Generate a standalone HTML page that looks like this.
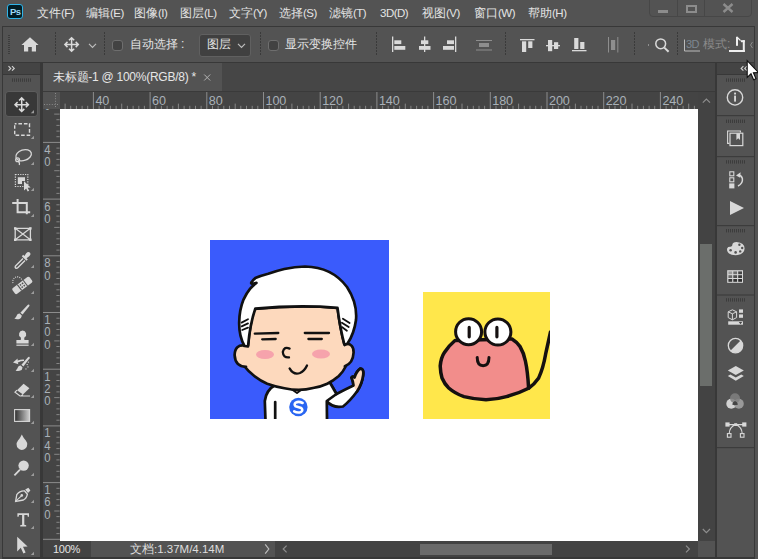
<!DOCTYPE html>
<html lang="zh">
<head>
<meta charset="utf-8">
<title>Photoshop</title>
<style>
*{margin:0;padding:0;box-sizing:border-box}
html,body{width:758px;height:559px;overflow:hidden;background:#535353}
body{position:relative;font-family:"Liberation Sans",sans-serif;color:#dcdcdc;font-size:13px}
.abs{position:absolute}
#menubar{position:absolute;left:0;top:0;width:758px;height:26px;background:#535353}
#menubar .mi{position:absolute;top:4px;height:18px;line-height:18px;font-size:12px;color:#e4e4e4;white-space:nowrap}
#menubar .mi i{font-style:normal;font-size:11.5px;letter-spacing:-0.5px}
#frame{position:absolute;left:2px;top:26px;width:753px;height:533px;background:#383838}
#optbar{position:absolute;left:3px;top:27px;width:751px;height:35px;background:#535353}
.vsep{position:absolute;top:5px;width:1px;height:24px;background:repeating-linear-gradient(to bottom,#3a3a3a 0 2px,transparent 2px 3px)}
.cb{position:absolute;width:11px;height:11px;border:1px solid #6e6e6e;border-radius:3px;background:#424242}
.ot{position:absolute;top:8px;height:18px;line-height:18px;font-size:12px;color:#e4e4e4;white-space:nowrap}
#toolhead{position:absolute;left:3px;top:63px;width:37px;height:11px;background:#444}
#tools{position:absolute;left:3px;top:75px;width:37px;height:482px;background:#535353}
#tabbar{position:absolute;left:43px;top:63px;width:672px;height:28px;background:#464646}
#tab{position:absolute;left:43px;top:63px;width:179px;height:28px;background:#535353;font-size:13px;line-height:28px;color:#e6e6e6;white-space:nowrap}
#hruler{position:absolute;left:43px;top:92px;width:655px;height:17px;background:#444;overflow:hidden}
#vruler{position:absolute;left:43px;top:109px;width:17px;height:432px;background:#444;overflow:hidden}
#rcorner{position:absolute;left:43px;top:92px;width:17px;height:17px;background:#535353}
#canvas{position:absolute;left:60px;top:109px;width:638px;height:432px;background:#fff;overflow:hidden}
#vscroll{position:absolute;left:698px;top:92px;width:17px;height:449px;background:#434343}
#status{position:absolute;left:43px;top:541px;width:672px;height:16px;background:#535353}
#rhead{position:absolute;left:717px;top:63px;width:37px;height:11px;background:#444}
#rpanel{position:absolute;left:717px;top:75px;width:37px;height:482px;background:#535353}
</style>
</head>
<body>
<div id="menubar">
<div class="abs" style="left:7px;top:4px;width:16px;height:15px;background:#001d26;border:1px solid #2fb4e9;border-radius:3px"></div>
<span class="abs" style="left:10px;top:5px;font-size:9.5px;line-height:13px;font-weight:bold;color:#9fd9f6;letter-spacing:-0.5px">Ps</span>
<span class="mi" style="left:37px">文件<i>(F)</i></span>
<span class="mi" style="left:86px">编辑<i>(E)</i></span>
<span class="mi" style="left:134px">图像<i>(I)</i></span>
<span class="mi" style="left:180px">图层<i>(L)</i></span>
<span class="mi" style="left:229px">文字<i>(Y)</i></span>
<span class="mi" style="left:279px">选择<i>(S)</i></span>
<span class="mi" style="left:329px">滤镜<i>(T)</i></span>
<span class="mi" style="left:380px"><i>3D(D)</i></span>
<span class="mi" style="left:422px">视图<i>(V)</i></span>
<span class="mi" style="left:474px">窗口<i>(W)</i></span>
<span class="mi" style="left:528px">帮助<i>(H)</i></span>
<div class="abs" style="left:649px;top:-1px;width:103px;height:18px;border:1px solid #474747;border-radius:0 0 4px 4px"></div>
<div class="abs" style="left:677px;top:0;width:1px;height:17px;background:#474747"></div>
<div class="abs" style="left:704px;top:0;width:1px;height:17px;background:#474747"></div>
<div class="abs" style="left:658px;top:10px;width:10px;height:3px;background:#8c8c8c"></div>
<div class="abs" style="left:686px;top:5px;width:10.5px;height:8px;border:2px solid #8c8c8c"></div>
<svg class="abs" style="left:722px;top:3px" width="12" height="10" viewBox="0 0 12 10"><path d="M1.5 1 L10.5 9 M10.5 1 L1.5 9" stroke="#8c8c8c" stroke-width="2.4" fill="none"/></svg>
</div>
<div id="frame"></div>
<div id="optbar">
<div class="abs" style="left:5px;top:8px;width:2px;height:20px;background:repeating-linear-gradient(to bottom,#3c3c3c 0 1px,transparent 1px 2px)"></div>
<div class="vsep" style="left:52px"></div>
<div class="vsep" style="left:101px"></div>
<div class="cb" style="left:109px;top:13px"></div>
<span class="ot" style="left:127px">自动选择<span style="margin-left:3px">:</span></span>
<div class="abs" style="left:196px;top:7px;width:52px;height:23px;background:#404040;border:1px solid #606060;border-radius:3px"></div>
<span class="ot" style="left:204px">图层</span>
<div class="vsep" style="left:257px"></div>
<div class="cb" style="left:265px;top:13px"></div>
<span class="ot" style="left:282px">显示变换控件</span>
<div class="vsep" style="left:373px"></div>
<div class="vsep" style="left:502px"></div>
<div class="vsep" style="left:631px"></div>
<div class="vsep" style="left:674px"></div>
<span class="ot" style="left:683px;color:#7d8790;font-size:11px;letter-spacing:-0.5px">3D</span>
<span class="ot" style="left:700px;color:#8a8a8a;font-size:12px">模式:</span>
</div>
<div id="toolhead"></div>
<div id="tools"></div>
<div id="tabbar"></div>
<div id="tab"><span id="tabtxt" style="position:absolute;left:10px;font-size:12px;letter-spacing:-0.25px">未标题-1 @ 100%(RGB/8) *</span><svg class="abs" style="left:160px;top:10px" width="9" height="9" viewBox="0 0 9 9"><path d="M1.2 1.5 L7.2 7.5 M7.2 1.5 L1.2 7.5" stroke="#b4b4b4" stroke-width="1" fill="none"/></svg></div>
<div class="abs" style="left:43px;top:91px;width:672px;height:1px;background:#3a3a3a"></div>
<div id="hruler"></div>
<div id="vruler"></div>
<div id="rcorner"></div>
<svg class="abs" style="left:0;top:0" width="758" height="559" viewBox="0 0 758 559" font-family="Liberation Sans, sans-serif">
<defs><clipPath id="hc"><rect x="60" y="92" width="638" height="17"/></clipPath><clipPath id="vc"><rect x="43" y="109" width="17" height="432"/></clipPath></defs>
<g clip-path="url(#hc)"><rect x="58.9" y="105.8" width="1" height="3.2" fill="#858585"/><rect x="64.6" y="103.6" width="1" height="5.4" fill="#858585"/><rect x="70.2" y="105.8" width="1" height="3.2" fill="#858585"/><rect x="75.9" y="105.8" width="1" height="3.2" fill="#858585"/><rect x="81.6" y="105.8" width="1" height="3.2" fill="#858585"/><rect x="87.2" y="105.8" width="1" height="3.2" fill="#858585"/><rect x="92.9" y="92" width="1" height="17" fill="#8c8c8c"/><text x="95.4" y="105.4" fill="#a9b1b8" font-size="12.6" letter-spacing="-0.1">40</text><rect x="98.6" y="105.8" width="1" height="3.2" fill="#858585"/><rect x="104.2" y="105.8" width="1" height="3.2" fill="#858585"/><rect x="109.9" y="105.8" width="1" height="3.2" fill="#858585"/><rect x="115.6" y="105.8" width="1" height="3.2" fill="#858585"/><rect x="121.2" y="103.6" width="1" height="5.4" fill="#858585"/><rect x="126.9" y="105.8" width="1" height="3.2" fill="#858585"/><rect x="132.6" y="105.8" width="1" height="3.2" fill="#858585"/><rect x="138.3" y="105.8" width="1" height="3.2" fill="#858585"/><rect x="143.9" y="105.8" width="1" height="3.2" fill="#858585"/><rect x="149.6" y="92" width="1" height="17" fill="#8c8c8c"/><text x="152.1" y="105.4" fill="#a9b1b8" font-size="12.6" letter-spacing="-0.1">60</text><rect x="155.3" y="105.8" width="1" height="3.2" fill="#858585"/><rect x="160.9" y="105.8" width="1" height="3.2" fill="#858585"/><rect x="166.6" y="105.8" width="1" height="3.2" fill="#858585"/><rect x="172.3" y="105.8" width="1" height="3.2" fill="#858585"/><rect x="177.9" y="103.6" width="1" height="5.4" fill="#858585"/><rect x="183.6" y="105.8" width="1" height="3.2" fill="#858585"/><rect x="189.3" y="105.8" width="1" height="3.2" fill="#858585"/><rect x="195.0" y="105.8" width="1" height="3.2" fill="#858585"/><rect x="200.6" y="105.8" width="1" height="3.2" fill="#858585"/><rect x="206.3" y="92" width="1" height="17" fill="#8c8c8c"/><text x="208.8" y="105.4" fill="#a9b1b8" font-size="12.6" letter-spacing="-0.1">80</text><rect x="212.0" y="105.8" width="1" height="3.2" fill="#858585"/><rect x="217.6" y="105.8" width="1" height="3.2" fill="#858585"/><rect x="223.3" y="105.8" width="1" height="3.2" fill="#858585"/><rect x="229.0" y="105.8" width="1" height="3.2" fill="#858585"/><rect x="234.7" y="103.6" width="1" height="5.4" fill="#858585"/><rect x="240.3" y="105.8" width="1" height="3.2" fill="#858585"/><rect x="246.0" y="105.8" width="1" height="3.2" fill="#858585"/><rect x="251.7" y="105.8" width="1" height="3.2" fill="#858585"/><rect x="257.3" y="105.8" width="1" height="3.2" fill="#858585"/><rect x="263.0" y="92" width="1" height="17" fill="#8c8c8c"/><text x="265.5" y="105.4" fill="#a9b1b8" font-size="12.6" letter-spacing="-0.1">100</text><rect x="268.7" y="105.8" width="1" height="3.2" fill="#858585"/><rect x="274.3" y="105.8" width="1" height="3.2" fill="#858585"/><rect x="280.0" y="105.8" width="1" height="3.2" fill="#858585"/><rect x="285.7" y="105.8" width="1" height="3.2" fill="#858585"/><rect x="291.4" y="103.6" width="1" height="5.4" fill="#858585"/><rect x="297.0" y="105.8" width="1" height="3.2" fill="#858585"/><rect x="302.7" y="105.8" width="1" height="3.2" fill="#858585"/><rect x="308.4" y="105.8" width="1" height="3.2" fill="#858585"/><rect x="314.0" y="105.8" width="1" height="3.2" fill="#858585"/><rect x="319.7" y="92" width="1" height="17" fill="#8c8c8c"/><text x="322.2" y="105.4" fill="#a9b1b8" font-size="12.6" letter-spacing="-0.1">120</text><rect x="325.4" y="105.8" width="1" height="3.2" fill="#858585"/><rect x="331.0" y="105.8" width="1" height="3.2" fill="#858585"/><rect x="336.7" y="105.8" width="1" height="3.2" fill="#858585"/><rect x="342.4" y="105.8" width="1" height="3.2" fill="#858585"/><rect x="348.1" y="103.6" width="1" height="5.4" fill="#858585"/><rect x="353.7" y="105.8" width="1" height="3.2" fill="#858585"/><rect x="359.4" y="105.8" width="1" height="3.2" fill="#858585"/><rect x="365.1" y="105.8" width="1" height="3.2" fill="#858585"/><rect x="370.7" y="105.8" width="1" height="3.2" fill="#858585"/><rect x="376.4" y="92" width="1" height="17" fill="#8c8c8c"/><text x="378.9" y="105.4" fill="#a9b1b8" font-size="12.6" letter-spacing="-0.1">140</text><rect x="382.1" y="105.8" width="1" height="3.2" fill="#858585"/><rect x="387.7" y="105.8" width="1" height="3.2" fill="#858585"/><rect x="393.4" y="105.8" width="1" height="3.2" fill="#858585"/><rect x="399.1" y="105.8" width="1" height="3.2" fill="#858585"/><rect x="404.8" y="103.6" width="1" height="5.4" fill="#858585"/><rect x="410.4" y="105.8" width="1" height="3.2" fill="#858585"/><rect x="416.1" y="105.8" width="1" height="3.2" fill="#858585"/><rect x="421.8" y="105.8" width="1" height="3.2" fill="#858585"/><rect x="427.4" y="105.8" width="1" height="3.2" fill="#858585"/><rect x="433.1" y="92" width="1" height="17" fill="#8c8c8c"/><text x="435.6" y="105.4" fill="#a9b1b8" font-size="12.6" letter-spacing="-0.1">160</text><rect x="438.8" y="105.8" width="1" height="3.2" fill="#858585"/><rect x="444.4" y="105.8" width="1" height="3.2" fill="#858585"/><rect x="450.1" y="105.8" width="1" height="3.2" fill="#858585"/><rect x="455.8" y="105.8" width="1" height="3.2" fill="#858585"/><rect x="461.5" y="103.6" width="1" height="5.4" fill="#858585"/><rect x="467.1" y="105.8" width="1" height="3.2" fill="#858585"/><rect x="472.8" y="105.8" width="1" height="3.2" fill="#858585"/><rect x="478.5" y="105.8" width="1" height="3.2" fill="#858585"/><rect x="484.1" y="105.8" width="1" height="3.2" fill="#858585"/><rect x="489.8" y="92" width="1" height="17" fill="#8c8c8c"/><text x="492.3" y="105.4" fill="#a9b1b8" font-size="12.6" letter-spacing="-0.1">180</text><rect x="495.5" y="105.8" width="1" height="3.2" fill="#858585"/><rect x="501.1" y="105.8" width="1" height="3.2" fill="#858585"/><rect x="506.8" y="105.8" width="1" height="3.2" fill="#858585"/><rect x="512.5" y="105.8" width="1" height="3.2" fill="#858585"/><rect x="518.1" y="103.6" width="1" height="5.4" fill="#858585"/><rect x="523.8" y="105.8" width="1" height="3.2" fill="#858585"/><rect x="529.5" y="105.8" width="1" height="3.2" fill="#858585"/><rect x="535.2" y="105.8" width="1" height="3.2" fill="#858585"/><rect x="540.8" y="105.8" width="1" height="3.2" fill="#858585"/><rect x="546.5" y="92" width="1" height="17" fill="#8c8c8c"/><text x="549.0" y="105.4" fill="#a9b1b8" font-size="12.6" letter-spacing="-0.1">200</text><rect x="552.2" y="105.8" width="1" height="3.2" fill="#858585"/><rect x="557.8" y="105.8" width="1" height="3.2" fill="#858585"/><rect x="563.5" y="105.8" width="1" height="3.2" fill="#858585"/><rect x="569.2" y="105.8" width="1" height="3.2" fill="#858585"/><rect x="574.9" y="103.6" width="1" height="5.4" fill="#858585"/><rect x="580.5" y="105.8" width="1" height="3.2" fill="#858585"/><rect x="586.2" y="105.8" width="1" height="3.2" fill="#858585"/><rect x="591.9" y="105.8" width="1" height="3.2" fill="#858585"/><rect x="597.5" y="105.8" width="1" height="3.2" fill="#858585"/><rect x="603.2" y="92" width="1" height="17" fill="#8c8c8c"/><text x="605.7" y="105.4" fill="#a9b1b8" font-size="12.6" letter-spacing="-0.1">220</text><rect x="608.9" y="105.8" width="1" height="3.2" fill="#858585"/><rect x="614.5" y="105.8" width="1" height="3.2" fill="#858585"/><rect x="620.2" y="105.8" width="1" height="3.2" fill="#858585"/><rect x="625.9" y="105.8" width="1" height="3.2" fill="#858585"/><rect x="631.5" y="103.6" width="1" height="5.4" fill="#858585"/><rect x="637.2" y="105.8" width="1" height="3.2" fill="#858585"/><rect x="642.9" y="105.8" width="1" height="3.2" fill="#858585"/><rect x="648.6" y="105.8" width="1" height="3.2" fill="#858585"/><rect x="654.2" y="105.8" width="1" height="3.2" fill="#858585"/><rect x="659.9" y="92" width="1" height="17" fill="#8c8c8c"/><text x="662.4" y="105.4" fill="#a9b1b8" font-size="12.6" letter-spacing="-0.1">240</text><rect x="665.6" y="105.8" width="1" height="3.2" fill="#858585"/><rect x="671.2" y="105.8" width="1" height="3.2" fill="#858585"/><rect x="676.9" y="105.8" width="1" height="3.2" fill="#858585"/><rect x="682.6" y="105.8" width="1" height="3.2" fill="#858585"/><rect x="688.2" y="103.6" width="1" height="5.4" fill="#858585"/><rect x="693.9" y="105.8" width="1" height="3.2" fill="#858585"/></g>
<g clip-path="url(#vc)"><rect x="56.4" y="107.9" width="3.2" height="1" fill="#858585"/><rect x="54.2" y="113.6" width="5.4" height="1" fill="#858585"/><rect x="56.4" y="119.2" width="3.2" height="1" fill="#858585"/><rect x="56.4" y="124.9" width="3.2" height="1" fill="#858585"/><rect x="56.4" y="130.6" width="3.2" height="1" fill="#858585"/><rect x="56.4" y="136.2" width="3.2" height="1" fill="#858585"/><rect x="43" y="141.9" width="17" height="1" fill="#8c8c8c"/><text transform="translate(44.2 153.9) scale(0.9 1)" fill="#a9b1b8" font-size="12.6">4</text><text transform="translate(44.2 166.2) scale(0.9 1)" fill="#a9b1b8" font-size="12.6">0</text><rect x="56.4" y="147.6" width="3.2" height="1" fill="#858585"/><rect x="56.4" y="153.2" width="3.2" height="1" fill="#858585"/><rect x="56.4" y="158.9" width="3.2" height="1" fill="#858585"/><rect x="56.4" y="164.6" width="3.2" height="1" fill="#858585"/><rect x="54.2" y="170.2" width="5.4" height="1" fill="#858585"/><rect x="56.4" y="175.9" width="3.2" height="1" fill="#858585"/><rect x="56.4" y="181.6" width="3.2" height="1" fill="#858585"/><rect x="56.4" y="187.3" width="3.2" height="1" fill="#858585"/><rect x="56.4" y="192.9" width="3.2" height="1" fill="#858585"/><rect x="43" y="198.6" width="17" height="1" fill="#8c8c8c"/><text transform="translate(44.2 210.6) scale(0.9 1)" fill="#a9b1b8" font-size="12.6">6</text><text transform="translate(44.2 222.9) scale(0.9 1)" fill="#a9b1b8" font-size="12.6">0</text><rect x="56.4" y="204.3" width="3.2" height="1" fill="#858585"/><rect x="56.4" y="209.9" width="3.2" height="1" fill="#858585"/><rect x="56.4" y="215.6" width="3.2" height="1" fill="#858585"/><rect x="56.4" y="221.3" width="3.2" height="1" fill="#858585"/><rect x="54.2" y="226.9" width="5.4" height="1" fill="#858585"/><rect x="56.4" y="232.6" width="3.2" height="1" fill="#858585"/><rect x="56.4" y="238.3" width="3.2" height="1" fill="#858585"/><rect x="56.4" y="244.0" width="3.2" height="1" fill="#858585"/><rect x="56.4" y="249.6" width="3.2" height="1" fill="#858585"/><rect x="43" y="255.3" width="17" height="1" fill="#8c8c8c"/><text transform="translate(44.2 267.3) scale(0.9 1)" fill="#a9b1b8" font-size="12.6">8</text><text transform="translate(44.2 279.6) scale(0.9 1)" fill="#a9b1b8" font-size="12.6">0</text><rect x="56.4" y="261.0" width="3.2" height="1" fill="#858585"/><rect x="56.4" y="266.6" width="3.2" height="1" fill="#858585"/><rect x="56.4" y="272.3" width="3.2" height="1" fill="#858585"/><rect x="56.4" y="278.0" width="3.2" height="1" fill="#858585"/><rect x="54.2" y="283.6" width="5.4" height="1" fill="#858585"/><rect x="56.4" y="289.3" width="3.2" height="1" fill="#858585"/><rect x="56.4" y="295.0" width="3.2" height="1" fill="#858585"/><rect x="56.4" y="300.7" width="3.2" height="1" fill="#858585"/><rect x="56.4" y="306.3" width="3.2" height="1" fill="#858585"/><rect x="43" y="312.0" width="17" height="1" fill="#8c8c8c"/><text transform="translate(44.2 324.0) scale(0.9 1)" fill="#a9b1b8" font-size="12.6">1</text><text transform="translate(44.2 336.3) scale(0.9 1)" fill="#a9b1b8" font-size="12.6">0</text><text transform="translate(44.2 348.6) scale(0.9 1)" fill="#a9b1b8" font-size="12.6">0</text><rect x="56.4" y="317.7" width="3.2" height="1" fill="#858585"/><rect x="56.4" y="323.3" width="3.2" height="1" fill="#858585"/><rect x="56.4" y="329.0" width="3.2" height="1" fill="#858585"/><rect x="56.4" y="334.7" width="3.2" height="1" fill="#858585"/><rect x="54.2" y="340.4" width="5.4" height="1" fill="#858585"/><rect x="56.4" y="346.0" width="3.2" height="1" fill="#858585"/><rect x="56.4" y="351.7" width="3.2" height="1" fill="#858585"/><rect x="56.4" y="357.4" width="3.2" height="1" fill="#858585"/><rect x="56.4" y="363.0" width="3.2" height="1" fill="#858585"/><rect x="43" y="368.7" width="17" height="1" fill="#8c8c8c"/><text transform="translate(44.2 380.7) scale(0.9 1)" fill="#a9b1b8" font-size="12.6">1</text><text transform="translate(44.2 393.0) scale(0.9 1)" fill="#a9b1b8" font-size="12.6">2</text><text transform="translate(44.2 405.3) scale(0.9 1)" fill="#a9b1b8" font-size="12.6">0</text><rect x="56.4" y="374.4" width="3.2" height="1" fill="#858585"/><rect x="56.4" y="380.0" width="3.2" height="1" fill="#858585"/><rect x="56.4" y="385.7" width="3.2" height="1" fill="#858585"/><rect x="56.4" y="391.4" width="3.2" height="1" fill="#858585"/><rect x="54.2" y="397.1" width="5.4" height="1" fill="#858585"/><rect x="56.4" y="402.7" width="3.2" height="1" fill="#858585"/><rect x="56.4" y="408.4" width="3.2" height="1" fill="#858585"/><rect x="56.4" y="414.1" width="3.2" height="1" fill="#858585"/><rect x="56.4" y="419.7" width="3.2" height="1" fill="#858585"/><rect x="43" y="425.4" width="17" height="1" fill="#8c8c8c"/><text transform="translate(44.2 437.4) scale(0.9 1)" fill="#a9b1b8" font-size="12.6">1</text><text transform="translate(44.2 449.7) scale(0.9 1)" fill="#a9b1b8" font-size="12.6">4</text><text transform="translate(44.2 462.0) scale(0.9 1)" fill="#a9b1b8" font-size="12.6">0</text><rect x="56.4" y="431.1" width="3.2" height="1" fill="#858585"/><rect x="56.4" y="436.7" width="3.2" height="1" fill="#858585"/><rect x="56.4" y="442.4" width="3.2" height="1" fill="#858585"/><rect x="56.4" y="448.1" width="3.2" height="1" fill="#858585"/><rect x="54.2" y="453.8" width="5.4" height="1" fill="#858585"/><rect x="56.4" y="459.4" width="3.2" height="1" fill="#858585"/><rect x="56.4" y="465.1" width="3.2" height="1" fill="#858585"/><rect x="56.4" y="470.8" width="3.2" height="1" fill="#858585"/><rect x="56.4" y="476.4" width="3.2" height="1" fill="#858585"/><rect x="43" y="482.1" width="17" height="1" fill="#8c8c8c"/><text transform="translate(44.2 494.1) scale(0.9 1)" fill="#a9b1b8" font-size="12.6">1</text><text transform="translate(44.2 506.4) scale(0.9 1)" fill="#a9b1b8" font-size="12.6">6</text><text transform="translate(44.2 518.7) scale(0.9 1)" fill="#a9b1b8" font-size="12.6">0</text><rect x="56.4" y="487.8" width="3.2" height="1" fill="#858585"/><rect x="56.4" y="493.4" width="3.2" height="1" fill="#858585"/><rect x="56.4" y="499.1" width="3.2" height="1" fill="#858585"/><rect x="56.4" y="504.8" width="3.2" height="1" fill="#858585"/><rect x="54.2" y="510.5" width="5.4" height="1" fill="#858585"/><rect x="56.4" y="516.1" width="3.2" height="1" fill="#858585"/><rect x="56.4" y="521.8" width="3.2" height="1" fill="#858585"/><rect x="56.4" y="527.5" width="3.2" height="1" fill="#858585"/><rect x="56.4" y="533.1" width="3.2" height="1" fill="#858585"/><rect x="43" y="538.8" width="17" height="1" fill="#8c8c8c"/><text transform="translate(44.2 550.8) scale(0.9 1)" fill="#a9b1b8" font-size="12.6">1</text><text transform="translate(44.2 563.1) scale(0.9 1)" fill="#a9b1b8" font-size="12.6">8</text><text transform="translate(44.2 575.4) scale(0.9 1)" fill="#a9b1b8" font-size="12.6">0</text><text transform="translate(44.2 109.5) scale(0.9 1)" fill="#a9b1b8" font-size="12.6">0</text></g>
<path d="M55.5 93 V108 M44 104.5 H59" stroke="#8a8a8a" stroke-width="1" stroke-dasharray="1 1.6" fill="none"/>
</svg>
<div id="canvas">
<svg class="abs" style="left:0;top:0" width="638" height="432" viewBox="60 109 638 432">
<defs><clipPath id="c1"><rect x="210" y="240" width="179" height="179"/></clipPath><clipPath id="c2"><rect x="423" y="292" width="127" height="127"/></clipPath></defs>
<rect x="210" y="240" width="179" height="179" fill="#3a5bfc"/>
<g clip-path="url(#c1)" stroke="#111" stroke-width="2.7" stroke-linejoin="round" stroke-linecap="round">
<!-- right arm + hand -->
<path d="M326.5 377 Q332 386 336.5 394 Q346 389 353.5 385.5 Q353 381 351.5 377.5 Q352.5 375.5 354.5 377.5 Q356.5 371 360.5 368.5 Q364 369 363.2 375 Q362 384 357 391.5 Q350 401 343 406.5 Q333 408.5 326.5 401 L326.8 421 L300 421 Z" fill="#fff"/>
<path d="M353.5 385.5 Q353 381 351.5 377.5 Q352.5 375.5 354.5 377.5 Q356.5 371 360.5 368.5 Q364 369 363.2 375 Q362 384 357 391.5 Q355 389 353.5 385.5 Z" fill="#fdd9bd" stroke="none"/>
<path d="M353.5 385.5 Q353 381 351.5 377.5 Q352.5 375.5 354.5 377.5 Q356.5 371 360.5 368.5 Q364 369 363.2 375 Q362 384 357 391.5" fill="none"/>
<!-- body -->
<path d="M276 384.5 Q266 390 264.8 401 L265.5 421 L327 421 L326.8 401 L336.5 394 Q332 386 326.5 377 Z" fill="#fff"/>
<path d="M275.2 402 V421" fill="none"/>
<!-- neck/collar skin -->
<path d="M287 386 L297 393 L307 385.5 Z" fill="#fdd9bd" stroke-width="2"/>
<!-- face -->
<path d="M254 309 Q298 304.6 337.5 307.8 Q340 328 344.5 345 Q346.5 356 346 366 Q343 372 338.8 376 Q333 381 327.3 383.7 Q320 387 313 388 Q300 391.5 284.4 388.3 Q275 386.5 267.2 383.7 Q260 380.5 254.3 376 Q248 371 244.6 366.5 Q244.5 355 248 346 Q250 324 254 309 Z" fill="#fdd9bd"/>
<!-- ears -->
<path d="M245 345.6 Q235 344 234.6 355 Q235.2 366.5 246 366.8 L250 366 L250 346 Z" fill="#fdd9bd" stroke="none"/>
<path d="M245 345.6 Q235 344 234.6 355 Q235.2 366.5 246 366.8" fill="none"/>
<path d="M345.6 344 Q353.8 343.4 353.6 352.5 Q353 363.5 344.8 366.2 L341 365 L341 346 Z" fill="#fdd9bd" stroke="none"/>
<path d="M345.6 344 Q353.8 343.4 353.6 352.5 Q353 363.5 344.8 366.2" fill="none"/>
<!-- hair -->
<path d="M244.5 346 Q238.8 336 239.2 322 Q239.4 310 243.5 299.6 Q246.5 293 250 288.8 Q253 285.5 256.4 282.9 L252.6 284 Q250.4 283.4 251.6 282.2 Q253 280 255.3 278.1 Q261 275.6 268.2 273.8 Q276 271 284.3 269 Q295 266.6 305 266.5 Q332 267 347 287 Q357.5 303 356 320 Q354 334 347.5 343.6 L344.5 345 Q340 328 337.5 307.8 Q298 304.6 255.3 308.7 Q250 324 248 346.5 Z" fill="#fff"/>
<path d="M241.6 322.6 L248 319.2 M241.7 326.4 L248 323.4 M242.2 330 L248 327.6" fill="none" stroke-width="1.8"/>
<path d="M342.9 318.7 L349.6 323 M341.9 322.7 L348.7 327.1 M341.9 327.1 L346.9 330.7" fill="none" stroke-width="1.8"/>
<!-- eyes -->
<path d="M254.8 333.6 L278.3 333 M262.2 339.3 L275.7 339" fill="none" stroke-width="2.3"/>
<path d="M304.8 333 L329 333 M308.4 339 L321.8 339" fill="none" stroke-width="2.3"/>
<!-- nose -->
<path d="M289.6 348.6 Q284.2 346 282.8 352 Q283.2 358 289 357.4" fill="none" stroke-width="2.3"/>
<!-- mouth -->
<path d="M289.6 368.4 Q293.5 375.4 300 373 Q304.5 371 307 365.5" fill="none" stroke-width="2.3"/>
<ellipse cx="265" cy="354.5" rx="9" ry="4.6" fill="#f6a3ac" stroke="none"/>
<ellipse cx="321" cy="354" rx="9" ry="4.6" fill="#f6a3ac" stroke="none"/>
<!-- S badge -->
<circle cx="298.4" cy="407" r="9.2" fill="#2a66f2" stroke="none"/>
<path d="M302.6 403 Q298.6 401 295.8 402.6 Q293.6 404.4 295.6 406.3 L301.2 408 Q303.4 410 301.2 411.8 Q298 413.4 294.2 411.4" fill="none" stroke="#fff" stroke-width="2.6"/>
</g>
<rect x="423" y="292" width="127" height="127" fill="#ffe74b"/>
<g clip-path="url(#c2)" stroke="#151010" stroke-width="3.5" stroke-linejoin="round" stroke-linecap="round">
<path d="M440.2 366 Q441 357.5 444.4 352.5 Q448.5 346 455 340.5 L512 339 Q517.5 342.5 520 346.5 Q523.8 353 525.4 361 Q527.8 372 528.6 388.2 Q518 393.6 506.4 396.6 Q497 399.4 486 399.7 Q475 399.4 464 396.6 Q455 393.5 448.7 388 Q444.5 384 442 378 Q440.5 373 440.2 366 Z" fill="#f28d8b"/>
<path d="M528.6 388.2 Q534 384.6 538.7 377.9 Q543.2 368 545.6 354.2 L550.5 332" fill="none"/>
<circle cx="468.6" cy="331.7" r="13" fill="#fff" stroke-width="3"/>
<circle cx="497.9" cy="332" r="13" fill="#fff" stroke-width="3"/>
<path d="M469.2 327.4 V336.8 M496.9 327.4 V336.8" fill="none" stroke-width="3.2"/>
<path d="M477.2 357.6 Q477.3 365.8 483.1 365.8 Q488.9 365.8 489 357.6" fill="none" stroke-width="3"/>
</g>
</svg>
</div>
<div id="vscroll">
<div class="abs" style="left:2px;top:152px;width:12px;height:142px;background:#6b6e6b"></div>
</div>
<div id="status">
<div class="abs" style="left:0;top:0;width:48px;height:16px;background:#434343"></div>
<span class="abs" style="left:10px;top:1px;font-size:11px;line-height:14px;color:#e4e4e4;letter-spacing:-0.3px">100%</span>
<span class="abs" id="doctxt" style="left:87px;top:0px;font-size:11.5px;line-height:16px;color:#dedede;white-space:nowrap">文档:1.37M/4.14M</span>
<div class="abs" style="left:232px;top:0;width:423px;height:16px;background:#434343"></div>
<div class="abs" style="left:377px;top:2.5px;width:132px;height:11.5px;background:#6a6a6a"></div>
</div>
<div id="rhead"></div>
<div id="rpanel"></div>
<svg id="ico" class="abs" style="left:0;top:0" width="758" height="559" viewBox="0 0 758 559">
<g fill="#dadada" stroke="none">
<path d="M30 37.2 L38.6 45 L36 45 L36 51.6 L31.8 51.6 L31.8 47 L28.2 47 L28.2 51.6 L24 51.6 L24 45 L21.4 45 Z"/>
<path fill="none" stroke="#dadada" stroke-width="1.5" stroke-linejoin="miter" d="M71.6 38 V51 M65 44.5 H78.2 M69 40.3 L71.6 37.7 L74.2 40.3 M69 48.7 L71.6 51.3 L74.2 48.7 M67.5 41.9 L64.9 44.5 L67.5 47.1 M75.7 41.9 L78.3 44.5 L75.7 47.1"/>
<rect x="392" y="36.5" width="1.3" height="15.5"/><rect x="394.3" y="40.3" width="7" height="3.8"/><rect x="394.3" y="46" width="11" height="3.8"/>
<rect x="424" y="36.5" width="1.3" height="15.5"/><rect x="421" y="40.3" width="7.3" height="3.8"/><rect x="419" y="46" width="11.5" height="3.8"/>
<rect x="455" y="36.5" width="1.3" height="15.5"/><rect x="447" y="40.3" width="7" height="3.8"/><rect x="443" y="46" width="11" height="3.8"/>
<rect x="520" y="39" width="14.5" height="1.3"/><rect x="522" y="41.3" width="4.2" height="10.7"/><rect x="528.2" y="41.3" width="4.2" height="6.7"/>
<rect x="546" y="45" width="14" height="1.3"/><rect x="548" y="40" width="4.2" height="11.2"/><rect x="554" y="42.2" width="4.2" height="6.8"/>
<rect x="572" y="50" width="14.5" height="1.3"/><rect x="574.2" y="38" width="4.2" height="11"/><rect x="580.2" y="42" width="4.2" height="7"/>
</g>
<g fill="#8e8e8e">
<rect x="476" y="40" width="16" height="1"/><rect x="476" y="49.5" width="16" height="1"/><rect x="479" y="43" width="10" height="4"/>
<rect x="608" y="37" width="1" height="15.5"/><rect x="617.3" y="37" width="1" height="15.5"/><rect x="611" y="40" width="4.2" height="10"/>
<rect x="648" y="44" width="1" height="2"/>
</g>
<path d="M89 43.8 L92.5 47.3 L96 43.8" fill="none" stroke="#bdbdbd" stroke-width="1.2"/>
<path d="M238 43.8 L241.5 47.3 L245 43.8" fill="none" stroke="#bdbdbd" stroke-width="1.2"/>
<circle cx="660.7" cy="43.8" r="4.9" fill="none" stroke="#dadada" stroke-width="1.5"/>
<path d="M664.3 47.6 L668.6 51.8" stroke="#dadada" stroke-width="2" fill="none"/>
<path d="M684.5 39.5 V51 H700" fill="none" stroke="#bcbcbc" stroke-width="1"/>
<g fill="#efefef"><rect x="729" y="50" width="15.8" height="2"/><rect x="742.8" y="40.2" width="2" height="11.8"/><rect x="741" y="40.2" width="3.8" height="2"/><rect x="736" y="37" width="2" height="8.8"/><path d="M736 37.6 L737 36.2 L740.6 39.8 L740.6 41.4 L738 39 Z"/></g>

<path d="M752.5 42 L750.5 45 L752.5 48" fill="none" stroke="#8a8a8a" stroke-width="1"/>
<rect x="5.5" y="91.5" width="32" height="25" rx="3.5" fill="none" stroke="#5d5d5d" stroke-width="1"/><rect x="6" y="92" width="31" height="24" rx="3" fill="#383838"/>
<g fill="#9c9c9c"><path d="M34 110.0 V113.2 H30.8 Z"/><path d="M34 135.8 V139 H30.8 Z"/><path d="M34 161.8 V165 H30.8 Z"/><path d="M34 187.8 V191 H30.8 Z"/><path d="M34 213.8 V217 H30.8 Z"/><path d="M34 264.8 V268 H30.8 Z"/><path d="M34 290.8 V294 H30.8 Z"/><path d="M34 316.8 V320 H30.8 Z"/><path d="M34 342.8 V346 H30.8 Z"/><path d="M34 368.8 V372 H30.8 Z"/><path d="M34 394.8 V398 H30.8 Z"/><path d="M34 420.8 V424 H30.8 Z"/><path d="M34 446.8 V450 H30.8 Z"/><path d="M34 472.8 V476 H30.8 Z"/><path d="M34 499.8 V503 H30.8 Z"/><path d="M34 525.8 V529 H30.8 Z"/><path d="M34 551.8 V555 H30.8 Z"/></g>
<g fill="#d8d8d8" stroke="none">
<path transform="translate(-49.9,60.2)" fill="none" stroke="#dadada" stroke-width="1.5" stroke-linejoin="miter" d="M71.6 38 V51 M65 44.5 H78.2 M69 40.3 L71.6 37.7 L74.2 40.3 M69 48.7 L71.6 51.3 L74.2 48.7 M67.5 41.9 L64.9 44.5 L67.5 47.1 M75.7 41.9 L78.3 44.5 L75.7 47.1"/>
</g>
<rect x="14.7" y="123.7" width="14.8" height="11.6" fill="none" stroke="#d8d8d8" stroke-width="1.4" stroke-dasharray="3.6 1.9" stroke-dashoffset="1.8"/>
<g fill="none" stroke="#d8d8d8" stroke-width="1.3">
<ellipse cx="23.6" cy="155.2" rx="8" ry="5.3" transform="rotate(-18 23.6 155.2)"/>
<circle cx="17.6" cy="159.8" r="1.9"/>
<path d="M18.6 161.5 Q20 163 19.3 165"/>
</g>
<rect x="15.4" y="174.5" width="12.4" height="12" fill="none" stroke="#d8d8d8" stroke-width="1.2" stroke-dasharray="1.2 1.2"/>
<path d="M17.8 177.2 H25 V181 H22 V184 H17.8 Z" fill="#d8d8d8"/>
<path d="M24 181.3 L30.6 187.6 L27.6 187.8 L29.2 190.8 L27.6 191.5 L26.2 188.6 L24 190.6 Z" fill="#d8d8d8"/>
<path d="M17.6 199 V212.3 H30.2 M12.2 203 H26.8 V214.2" fill="none" stroke="#d8d8d8" stroke-width="2"/>
<path d="M15.2 228.3 H30.4 V239.8 H15.2 Z M15.2 228.3 L30.4 239.8 M30.4 228.3 L15.2 239.8" fill="none" stroke="#d8d8d8" stroke-width="1.3"/>
<g fill="#d8d8d8"><rect x="14" y="227.2" width="2.4" height="2.4"/><rect x="29.2" y="227.2" width="2.4" height="2.4"/><rect x="14" y="238.6" width="2.4" height="2.4"/><rect x="29.2" y="238.6" width="2.4" height="2.4"/></g>
<!-- eyedropper -->
<path d="M23 258.5 L16 265.5 Q14.6 266.9 15.6 267.9 Q16.6 268.9 18 267.5 L25 260.5" fill="none" stroke="#d8d8d8" stroke-width="1.4"/>
<path d="M21.8 256.2 L23.2 254.8 L24.4 256 L26.2 253.2 Q28.2 251 29.8 252.6 Q31.4 254.2 29.2 256.2 L26.6 258.2 L27.8 259.4 L26.4 260.8 Z" fill="#d8d8d8"/>
<!-- healing -->
<g transform="rotate(-37 22 285.5)"><rect x="11.6" y="282" width="21.4" height="7.2" rx="1.6" fill="#d8d8d8"/><rect x="18.2" y="282" width="1.1" height="7.2" fill="#535353"/><rect x="25.6" y="282" width="1.1" height="7.2" fill="#535353"/>
<g fill="#535353"><rect x="20.4" y="283.4" width="1.5" height="1.5"/><rect x="23" y="283.4" width="1.5" height="1.5"/><rect x="20.4" y="286.2" width="1.5" height="1.5"/><rect x="23" y="286.2" width="1.5" height="1.5"/></g></g>
<path d="M13 283 A4.6 4.6 0 0 1 21.8 280" fill="none" stroke="#d8d8d8" stroke-width="1.1" stroke-dasharray="1 1.1"/>
<!-- brush -->
<path d="M28.9 304.6 Q29.8 305 29.4 306 L22.6 314.6 L20.4 312.8 L27.6 305 Q28.3 304.4 28.9 304.6 Z" fill="#d8d8d8"/>
<path d="M19.6 313.6 L21.8 315.6 Q21.6 318.6 18.6 319.2 Q16 319.6 14.4 318.6 Q16.2 317.6 16.6 315.8 Q17.2 313.6 19.6 313.6 Z" fill="#d8d8d8"/>
<!-- stamp -->
<path d="M22.6 330.6 A3.6 3.6 0 0 1 24.6 337.2 Q24 338 24.4 340 H28.6 V343.4 H16.4 V340 H20.8 Q21.2 338 20.6 337.2 A3.6 3.6 0 0 1 22.6 330.6 Z" fill="#d8d8d8"/>
<rect x="16.4" y="344.6" width="12.2" height="1.2" fill="#d8d8d8"/>
<!-- history brush -->
<path d="M29.2 356.8 Q30 357.2 29.6 358.2 L23.4 366.4 L21.4 364.8 L28 357.2 Q28.6 356.6 29.2 356.8 Z" fill="#d8d8d8"/>
<path d="M20.6 365.6 L22.6 367.4 Q22.4 370.2 19.6 370.8 Q17.2 371.2 15.6 370.4 Q17.4 369.4 17.8 367.6 Q18.4 365.6 20.6 365.6 Z" fill="#d8d8d8"/>
<path d="M13 362.4 L17.6 358.6 L17.6 360.6 Q21 359.4 24 359.6 L24 361 Q21 361 17.8 362.4 L18.4 364.2 Z" fill="#d8d8d8"/>
<g fill="#d8d8d8"><rect x="26.6" y="364" width="1.1" height="1.1"/><rect x="27.4" y="366.4" width="1.1" height="1.1"/><rect x="25.4" y="368.4" width="1.1" height="1.1"/><rect x="27.8" y="361.6" width="1.1" height="1.1"/></g>
<!-- eraser -->
<path d="M23.6 383.8 L29.4 388.2 L23 394.6 L17 390.2 Z" fill="#d8d8d8"/>
<path d="M17 390.2 L15 392.2 L20 396 H30 M23 394.6 L21 396" fill="none" stroke="#d8d8d8" stroke-width="1.2"/>
<!-- gradient -->
<defs><linearGradient id="gr" x1="0" x2="1" y1="0" y2="0"><stop offset="0" stop-color="#2e2e2e"/><stop offset="1" stop-color="#d0d0d0"/></linearGradient></defs>
<rect x="14.6" y="409.6" width="15" height="11.8" fill="url(#gr)" stroke="#d8d8d8" stroke-width="1.1"/>
<!-- blur -->
<path d="M21.8 434.4 Q23.6 438 25.8 440.6 Q27.4 442.8 27.2 444.6 A5.3 5.3 0 0 1 16.6 444.6 Q16.4 442.8 18 440.6 Q20.2 438 21.8 434.4 Z" fill="#d8d8d8"/>
<!-- dodge -->
<circle cx="23.6" cy="465.6" r="5.2" fill="#d8d8d8"/>
<path d="M20 469.6 L14.4 475.4" stroke="#d8d8d8" stroke-width="1.8" fill="none"/>
<!-- pen -->
<g transform="translate(0,0)">
<path d="M25.2 489.6 L28.4 487.8 L30.4 490.6 L28 493 Z" fill="#d8d8d8"/>
<path d="M24.4 490.8 L27.4 494.2 Q26.6 498.6 23.4 500 L15.6 501.4 L16.8 494.6 Q19.6 490.6 24.4 490.8 Z" fill="none" stroke="#d8d8d8" stroke-width="1.3"/>
<path d="M15.8 501.2 L21.4 495.8" stroke="#d8d8d8" stroke-width="1.1"/><circle cx="21.8" cy="495.4" r="1.3" fill="#d8d8d8"/>
</g>
<!-- T -->
<path d="M17.4 513.2 H29 V516.8 H27.8 L27.4 515 H24.3 V524.8 L26.2 525.2 V526.4 H20.2 V525.2 L22.1 524.8 V515 H19 L18.6 516.8 H17.4 Z" fill="#d8d8d8"/>
<!-- arrow -->
<path d="M17.2 536.8 L27.6 546.4 L23 546.8 L25.6 552.4 L23.4 553.4 L20.8 547.8 L17.2 551.6 Z" fill="#d8d8d8"/>
<g fill="#3c3c3c"><rect x="726" y="78.4" width="1" height="3.4"/><rect x="728" y="78.4" width="1" height="3.4"/><rect x="730" y="78.4" width="1" height="3.4"/><rect x="732" y="78.4" width="1" height="3.4"/><rect x="734" y="78.4" width="1" height="3.4"/><rect x="736" y="78.4" width="1" height="3.4"/><rect x="738" y="78.4" width="1" height="3.4"/><rect x="740" y="78.4" width="1" height="3.4"/><rect x="742" y="78.4" width="1" height="3.4"/><rect x="744" y="78.4" width="1" height="3.4"/><rect x="726" y="119.6" width="1" height="3.4"/><rect x="728" y="119.6" width="1" height="3.4"/><rect x="730" y="119.6" width="1" height="3.4"/><rect x="732" y="119.6" width="1" height="3.4"/><rect x="734" y="119.6" width="1" height="3.4"/><rect x="736" y="119.6" width="1" height="3.4"/><rect x="738" y="119.6" width="1" height="3.4"/><rect x="740" y="119.6" width="1" height="3.4"/><rect x="742" y="119.6" width="1" height="3.4"/><rect x="744" y="119.6" width="1" height="3.4"/><rect x="726" y="160.2" width="1" height="3.4"/><rect x="728" y="160.2" width="1" height="3.4"/><rect x="730" y="160.2" width="1" height="3.4"/><rect x="732" y="160.2" width="1" height="3.4"/><rect x="734" y="160.2" width="1" height="3.4"/><rect x="736" y="160.2" width="1" height="3.4"/><rect x="738" y="160.2" width="1" height="3.4"/><rect x="740" y="160.2" width="1" height="3.4"/><rect x="742" y="160.2" width="1" height="3.4"/><rect x="744" y="160.2" width="1" height="3.4"/><rect x="726" y="229" width="1" height="3.4"/><rect x="728" y="229" width="1" height="3.4"/><rect x="730" y="229" width="1" height="3.4"/><rect x="732" y="229" width="1" height="3.4"/><rect x="734" y="229" width="1" height="3.4"/><rect x="736" y="229" width="1" height="3.4"/><rect x="738" y="229" width="1" height="3.4"/><rect x="740" y="229" width="1" height="3.4"/><rect x="742" y="229" width="1" height="3.4"/><rect x="744" y="229" width="1" height="3.4"/><rect x="726" y="298.2" width="1" height="3.4"/><rect x="728" y="298.2" width="1" height="3.4"/><rect x="730" y="298.2" width="1" height="3.4"/><rect x="732" y="298.2" width="1" height="3.4"/><rect x="734" y="298.2" width="1" height="3.4"/><rect x="736" y="298.2" width="1" height="3.4"/><rect x="738" y="298.2" width="1" height="3.4"/><rect x="740" y="298.2" width="1" height="3.4"/><rect x="742" y="298.2" width="1" height="3.4"/><rect x="744" y="298.2" width="1" height="3.4"/><rect x="12" y="78.4" width="1" height="3.4"/><rect x="14" y="78.4" width="1" height="3.4"/><rect x="16" y="78.4" width="1" height="3.4"/><rect x="18" y="78.4" width="1" height="3.4"/><rect x="20" y="78.4" width="1" height="3.4"/><rect x="22" y="78.4" width="1" height="3.4"/><rect x="24" y="78.4" width="1" height="3.4"/><rect x="26" y="78.4" width="1" height="3.4"/><rect x="28" y="78.4" width="1" height="3.4"/><rect x="30" y="78.4" width="1" height="3.4"/></g><g fill="#3c3c3c"><rect x="717" y="115" width="37" height="1.2"/><rect x="717" y="156" width="37" height="1.2"/><rect x="717" y="225" width="37" height="1.2"/><rect x="717" y="294.4" width="37" height="1.2"/><rect x="717" y="447" width="37" height="1.2"/></g>
<circle cx="735" cy="97.4" r="7.7" fill="none" stroke="#d8d8d8" stroke-width="1.4"/>
<rect x="734.1" y="95.6" width="1.9" height="6" fill="#d8d8d8"/><rect x="734.1" y="92.6" width="1.9" height="1.9" fill="#d8d8d8"/>
<path d="M729.6 131 H740.4 V132.6 M729.6 131 H727.6 V143.4 H729.4" fill="none" stroke="#d8d8d8" stroke-width="1.1"/>
<rect x="730" y="133.2" width="12.8" height="12.4" fill="none" stroke="#d8d8d8" stroke-width="1.2"/>
<path d="M736.4 133.2 H740 V140 L738.2 138.2 L736.4 140 Z" fill="#d8d8d8"/>
<g fill="none" stroke="#d8d8d8" stroke-width="1.1"><rect x="729.8" y="171.8" width="4" height="4"/><rect x="729.8" y="177.8" width="4" height="4"/></g>
<rect x="729.2" y="183.4" width="5.2" height="5" fill="#d8d8d8"/>
<path d="M738 186 Q743 183.5 742.4 178.6 Q741.6 175.4 738.6 175" fill="none" stroke="#d8d8d8" stroke-width="1.5"/>
<path d="M736 175.4 L740.6 172.2 L740.2 177.8 Z" fill="#d8d8d8"/>
<path d="M730 201 L744 208 L730 215 Z" fill="#d8d8d8"/>
<path d="M736.6 242 Q744.6 242.6 744.6 248.6 Q744.4 254 737.6 255 Q732 255.6 729 253.4 Q726.4 251.2 727.2 248.2 Q728 246.6 730.6 246.8 Q732.6 246.6 732.4 244.6 Q732.6 242 736.6 242 Z" fill="#d8d8d8"/>
<g fill="#535353"><circle cx="739.4" cy="244.8" r="1.2"/><circle cx="742.2" cy="248" r="1.2"/><circle cx="740.2" cy="251.4" r="1.2"/><circle cx="735.6" cy="252.4" r="1.3"/><circle cx="730.6" cy="250.2" r="1.3"/></g>
<rect x="727.2" y="270.2" width="15.8" height="12.6" fill="#d8d8d8"/>
<g><rect x="728.4" y="271.4" width="3.8" height="2.8" fill="#9a9a9a"/><rect x="733.3" y="271.4" width="3.8" height="2.8" fill="#6e6e6e"/><rect x="738.2" y="271.4" width="3.8" height="2.8" fill="#444"/>
<rect x="728.4" y="275.2" width="3.8" height="2.8" fill="#6a6a6a"/><rect x="733.3" y="275.2" width="3.8" height="2.8" fill="#4c4c4c"/><rect x="738.2" y="275.2" width="3.8" height="2.8" fill="#3a3a3a"/>
<rect x="728.4" y="279" width="3.8" height="2.8" fill="#383838"/><rect x="733.3" y="279" width="3.8" height="2.8" fill="#333"/><rect x="738.2" y="279" width="3.8" height="2.8" fill="#2c2c2c"/></g>
<path d="M732.4 309.8 L736.6 311.8 V317.6 L732.4 319.8 L728.2 317.6 V311.8 Z M728.2 311.8 L732.4 313.8 L736.6 311.8 M732.4 313.8 V319.8" fill="none" stroke="#d8d8d8" stroke-width="1"/>
<rect x="739" y="309.4" width="4" height="3.4" fill="#d8d8d8"/><rect x="739" y="314.4" width="4" height="3.4" fill="#d8d8d8"/>
<rect x="728.2" y="321.3" width="14.8" height="3.4" fill="#d8d8d8"/><path d="M738.8 322 H742.2 L740.5 324.2 Z" fill="#444"/>
<circle cx="735.5" cy="345.6" r="7.2" fill="none" stroke="#d8d8d8" stroke-width="1.3"/>
<path d="M740.6 340.5 A7.2 7.2 0 0 1 730.4 350.7 Z" fill="#d8d8d8"/>
<path d="M735.8 366 L743.8 370.5 L735.8 375 L727.8 370.5 Z" fill="#d8d8d8"/>
<path d="M730.4 374.6 L735.8 377.6 L741.2 374.6 L743.8 376 L735.8 380.8 L727.8 376 Z" fill="#d8d8d8"/>
<circle cx="731.3" cy="403.8" r="5" fill="#d2d2d2"/><circle cx="738.8" cy="403.8" r="5" fill="#a6a6a6" fill-opacity="0.85"/><circle cx="735" cy="398.2" r="5" fill="#808080" fill-opacity="0.85"/>
<path d="M735 401 Q737.4 402 738 404.4 Q735 406 732.2 404.4 Q732.6 402 735 401 Z" fill="#444"/>
<path d="M729 424.6 H743 M735.6 424.6 Q729.6 427 729.2 433.6 M735.8 424.6 Q741.8 427 742.2 433.6" fill="none" stroke="#d8d8d8" stroke-width="1.1"/>
<rect x="725.4" y="422.4" width="4.2" height="4.2" fill="#d8d8d8"/><rect x="742.2" y="422.4" width="4.2" height="4.2" fill="#d8d8d8"/><rect x="734.2" y="423.2" width="3" height="2.8" fill="#d8d8d8"/>
<rect x="727.4" y="433.6" width="3.6" height="3.6" fill="#535353" stroke="#d8d8d8" stroke-width="1.1"/><rect x="740.4" y="433.6" width="3.6" height="3.6" fill="#535353" stroke="#d8d8d8" stroke-width="1.1"/>
<!-- collapse chevrons -->
<path d="M8.5 66.2 L10.7 68.4 L8.5 70.6 M12 66.2 L14.2 68.4 L12 70.6" fill="none" stroke="#d0d0d0" stroke-width="1.2"/>
<path d="M743.4 66.2 L741.2 68.4 L743.4 70.6 M747 66.2 L744.8 68.4 L747 70.6" fill="none" stroke="#d0d0d0" stroke-width="1.2"/>
<!-- scrollbar arrows -->
<g fill="none" stroke="#8e8e8e" stroke-width="1.2">
<path d="M702.8 102.6 L706.4 99 L710 102.6"/>
<path d="M702.8 529 L706.4 532.6 L710 529"/>
<path d="M286.6 545.6 L283.2 549 L286.6 552.4"/>
<path d="M686 545.6 L689.4 549 L686 552.4"/>
</g>
<path d="M265.2 544.4 L268.8 549 L265.2 553.6" fill="none" stroke="#bdbdbd" stroke-width="1.2"/>
<path d="M747.2 60.6 L747.2 77.4 L751 73.8 L753.6 79.8 L756 78.8 L753.4 72.8 L758.6 72.6 Z" fill="#fff" stroke="#111" stroke-width="1.1" stroke-linejoin="miter"/>
</svg>
</body>
</html>
